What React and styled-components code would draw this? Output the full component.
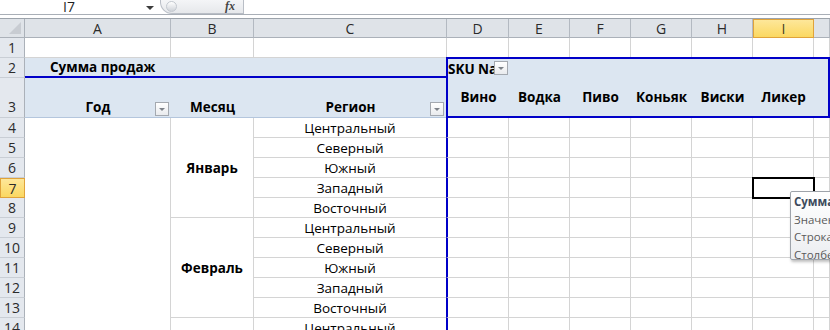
import React from "react";
import styled, { createGlobalStyle, css } from "styled-components";

const GlobalStyle = createGlobalStyle`
    html, body {
        margin: 0;
        padding: 0;
        background: #ffffff;
        overflow: hidden;
    }
    body {
        font-family: "Open Sans", "Noto Sans", sans-serif;
    }
`;

const Page = styled.div`
    position: relative;
    width: 830px;
    height: 330px;
    overflow: hidden;
    background: #ffffff;
`;

const FormulaBar = styled.div`
    height: 14px;
    display: flex;
    align-items: flex-end;
    overflow: hidden;
    border-bottom: 1px solid #a9afb7;
`;

const NameBox = styled.div`
    width: 160px;
    height: 14px;
    display: flex;
    align-items: flex-end;
    justify-content: space-between;
    box-sizing: border-box;
    padding: 0 6px 0 63px;
    font-size: 14px;
    line-height: 14px;
    color: #1f1f1f;
`;

const Arrow = styled.span`
    width: 0;
    height: 0;
    margin-bottom: 4px;
    border-left: 4px solid transparent;
    border-right: 4px solid transparent;
    border-top: 4px solid #3c3c3c;
`;

const FxBox = styled.div`
    width: 84px;
    height: 14px;
    display: flex;
    align-items: center;
    justify-content: space-between;
    box-sizing: border-box;
    padding: 0 8px 0 5px;
    background: linear-gradient(#f4f5f7, #e6e8eb);
    border: 1px solid #b9bec6;
    border-top: none;
    border-radius: 0 0 0 12px;
`;

const Knob = styled.span`
    width: 9px;
    height: 9px;
    border-radius: 50%;
    background: linear-gradient(#ffffff, #cfd3d9);
    border: 1px solid #c3c8cf;
`;

const Fx = styled.span`
    font-family: "Liberation Serif", "DejaVu Serif", serif;
    font-style: italic;
    font-weight: bold;
    font-size: 12px;
    color: #444;
`;

const Gap = styled.div`
    height: 3px;
    border-bottom: 1px solid #9ca3ab;
`;

const Sheet = styled.div`
    display: grid;
    grid-template-columns: 25px 146px 83px 193px 62px 61px 61px 61px 61px 61px 1fr;
    grid-template-rows: 19px 20px 20px 40px repeat(11, 20px);
    font-size: 13.5px;
    color: #000;
`;

const Corner = styled.div`
    position: relative;
    background: #dfe3e8;
    border-right: 1px solid #abb1b9;
    border-bottom: 1px solid #abb1b9;
    &::after {
        content: "";
        position: absolute;
        right: 3px;
        bottom: 3px;
        border-left: 12px solid transparent;
        border-bottom: 12px solid #c8ccd2;
    }
`;

const ColHead = styled.div`
    display: flex;
    align-items: center;
    justify-content: center;
    font-size: 14px;
    color: #2b2b2b;
    background: #dfe3e8;
    border-right: 1px solid #b3b9c1;
    border-bottom: 1px solid #abb1b9;
    ${(p) =>
        p.$active &&
        css`
            background: linear-gradient(#fde79a, #fbd861);
            border: 1px solid #e0a33a;
            color: #3d3d1f;
        `}
`;

const RowHead = styled.div`
    grid-column: 1;
    grid-row: ${(p) => p.$row};
    display: flex;
    align-items: center;
    justify-content: center;
    font-size: 14px;
    color: #2b2b2b;
    background: #e4e8ee;
    border-right: 1px solid #abb1b9;
    border-bottom: 1px solid #c9ced5;
    ${(p) =>
        p.$tall &&
        css`
            align-items: flex-end;
            padding-bottom: 1px;
        `}
    ${(p) =>
        p.$active &&
        css`
            background: linear-gradient(#fde79a, #fbd861);
            border: 1px solid #e0a33a;
        `}
`;

const Cell = styled.div`
    position: relative;
    grid-column: ${(p) => p.$col};
    grid-row: ${(p) => p.$row};
    display: flex;
    align-items: center;
    justify-content: center;
    white-space: nowrap;
    overflow: hidden;
    border-right: 1px solid #d4d4d4;
    border-bottom: 1px solid #d4d4d4;
    ${(p) =>
        p.$selected &&
        css`
            overflow: visible;
            z-index: 2;
            outline: 2px solid #000;
            outline-offset: -1px;
        `}
`;

const PivotLabel = styled.div`
    grid-column: 2 / 5;
    grid-row: 3;
    display: flex;
    align-items: center;
    padding-left: 25px;
    font-weight: bold;
    background: #dce6f1;
    border-bottom: 2px solid #0000c8;
`;

const PivotField = styled.div`
    position: relative;
    grid-column: ${(p) => p.$col};
    grid-row: 4;
    display: flex;
    align-items: flex-end;
    justify-content: center;
    padding-bottom: 1px;
    font-weight: bold;
    background: #dce6f1;
    border-bottom: 1px solid #b4c6dd;
`;

const ColumnBox = styled.div`
    position: relative;
    grid-column: ${(p) => p.$col};
    grid-row: ${(p) => p.$row};
    display: flex;
    align-items: center;
    justify-content: center;
    white-space: nowrap;
    font-weight: bold;
    background: #dce6f1;
    border-color: #0000c8;
    border-style: solid;
    border-width: 0;
    ${(p) => p.$top && css`border-top-width: 2px; margin-top: -1px;`}
    ${(p) => p.$bottom && css`border-bottom-width: 2px;`}
    ${(p) => p.$left && css`border-left-width: 2px; margin-left: -1px;`}
    ${(p) => p.$right && css`border-right-width: 2px;`}
    ${(p) => p.$start && css`justify-content: flex-start; overflow: hidden;`}
`;

const DataCell = styled(Cell)`
    ${(p) =>
        p.$edge &&
        css`
            margin-left: -1px;
            border-left: 2px solid #0000c8;
        `}
`;

const FilterButton = styled.span`
    position: absolute;
    right: ${(p) => p.$right}px;
    bottom: ${(p) => p.$bottom}px;
    width: 14px;
    height: 14px;
    box-sizing: border-box;
    background: linear-gradient(#ffffff, #e9ebee);
    border: 1px solid #a4a9b0;
    &::after {
        content: "";
        position: absolute;
        left: 3px;
        top: 5px;
        border-left: 3.5px solid transparent;
        border-right: 3.5px solid transparent;
        border-top: 3.5px solid #7d8289;
    }
`;

const Tooltip = styled.div`
    position: absolute;
    left: 790px;
    top: 191px;
    width: 80px;
    height: 69px;
    box-sizing: border-box;
    padding: 1px 0 0 3px;
    background: linear-gradient(#ffffff, #eceef1);
    border: 1px solid #9ea3aa;
    border-radius: 2px;
    box-shadow: 1px 2px 3px rgba(0, 0, 0, 0.25);
    font-size: 11.5px;
    line-height: 17.5px;
    color: #5a5a5a;
    white-space: nowrap;
    z-index: 3;
`;

const TipTitle = styled.div`
    font-weight: bold;
    color: #3c4a5c;
`;

const columns = ["A", "B", "C", "D", "E", "F", "G", "H", "I", ""];
const products = ["Вино", "Водка", "Пиво", "Коньяк", "Виски", "Ликер", ""];
const regions = ["Центральный", "Северный", "Южный", "Западный", "Восточный"];
const rowNumbers = [1, 2, 3, 4, 5, 6, 7, 8, 9, 10, 11, 12, 13, 14];

const App = () => {
    const dataRows = rowNumbers.slice(3);

    return (
        <Page>
            <GlobalStyle />
            <FormulaBar>
                <NameBox>
                    I7
                    <Arrow />
                </NameBox>
                <FxBox>
                    <Knob />
                    <Fx>fx</Fx>
                </FxBox>
            </FormulaBar>
            <Gap />
            <Sheet>
                <Corner />
                {columns.map((c) => (
                    <ColHead key={c || "J"} $active={c === "I"}>
                        {c}
                    </ColHead>
                ))}

                {rowNumbers.map((n) => (
                    <RowHead key={n} $row={n + 1} $tall={n === 3} $active={n === 7}>
                        {n}
                    </RowHead>
                ))}

                {/* row 1 */}
                {columns.map((c, i) => (
                    <Cell key={"r1" + i} $col={i + 2} $row={2} />
                ))}

                {/* pivot header */}
                <PivotLabel>Сумма продаж</PivotLabel>
                <PivotField $col={2}>
                    Год
                    <FilterButton $right={2} $bottom={1} />
                </PivotField>
                <PivotField $col={3}>Месяц</PivotField>
                <PivotField $col={4}>
                    Регион
                    <FilterButton $right={3} $bottom={1} />
                </PivotField>

                {products.map((p, i) => (
                    <ColumnBox
                        key={"top" + i}
                        $col={i + 5}
                        $row={3}
                        $top
                        $left={i === 0}
                        $right={i === products.length - 1}
                        $start={i === 0}
                    >
                        {i === 0 && "SKU Na"}
                        {i === 0 && <FilterButton $right={1} $bottom={3} />}
                    </ColumnBox>
                ))}
                {products.map((p, i) => (
                    <ColumnBox
                        key={"lbl" + i}
                        $col={i + 5}
                        $row={4}
                        $bottom
                        $left={i === 0}
                        $right={i === products.length - 1}
                    >
                        {p}
                    </ColumnBox>
                ))}

                {/* row labels */}
                <Cell $col={2} $row="5 / 16" />
                <Cell $col={3} $row="5 / 10" style={{ fontWeight: "bold" }}>
                    Январь
                </Cell>
                <Cell $col={3} $row="10 / 15" style={{ fontWeight: "bold" }}>
                    Февраль
                </Cell>
                <Cell $col={3} $row={15} />

                {dataRows.map((n, idx) => (
                    <React.Fragment key={"d" + n}>
                        <Cell $col={4} $row={n + 1}>
                            {regions[idx % regions.length]}
                        </Cell>
                        {products.map((p, i) => (
                            <DataCell
                                key={"c" + n + i}
                                $col={i + 5}
                                $row={n + 1}
                                $edge={i === 0}
                                $selected={n === 7 && i === 5}
                            />
                        ))}
                    </React.Fragment>
                ))}
            </Sheet>
            <Tooltip>
                <TipTitle>Сумма продаж</TipTitle>
                <div>Значение:</div>
                <div>Строка:</div>
                <div>Столбец:</div>
            </Tooltip>
        </Page>
    );
};

export default App;
